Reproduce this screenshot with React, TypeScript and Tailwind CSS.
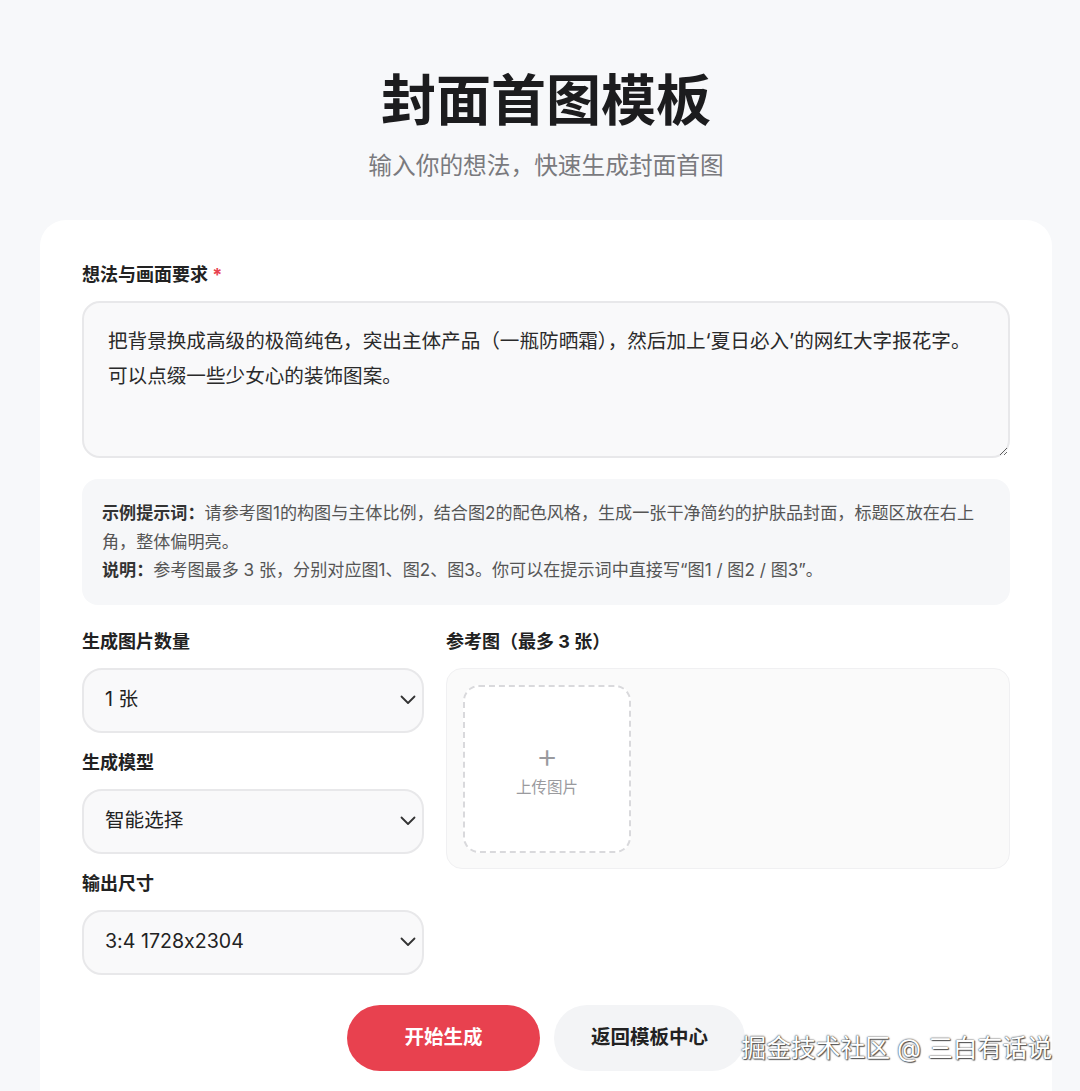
import React from "react";

const FONT = { fontFamily: 'Inter, "Noto Sans CJK SC", sans-serif' };

function Chevron() {
  return (
    <svg width="16" height="10" viewBox="0 0 16 10" fill="none">
      <polyline points="1.5,1.5 8,8 14.5,1.5" stroke="#333" strokeWidth="1.8" strokeLinecap="round" strokeLinejoin="round" />
    </svg>
  );
}

function SelectBox({ value }: { value: string }) {
  return (
    <div className="flex h-[65px] items-center justify-between rounded-[20px] border-2 border-[#e8e8ea] bg-[#f9f9fa] pl-[21px] pr-[6px]">
      <span className="text-[19.6px] text-[#222] [font-feature-settings:'calt'_0]">{value}</span>
      <Chevron />
    </div>
  );
}

function Label({ children }: { children: React.ReactNode }) {
  return <div className="mb-[13px] text-[18px] font-bold leading-[26px] text-[#222]">{children}</div>;
}

export default function App() {
  return (
    <div className="relative min-h-[1091px] overflow-hidden bg-[#f7f8fa]" style={FONT}>
      <div className="pl-[12px] pt-[64px] text-center">
        <h1 className="text-[55px] font-bold leading-[72px] text-[#1c1c1e]">封面首图模板</h1>
        <p className="mt-[14px] text-[23.7px] leading-[32px] text-[#7a7a7e]">输入你的想法，快速生成封面首图</p>
      </div>

      <div className="mx-[40px] mr-[28px] mt-[38px] rounded-[26px] bg-white px-[42px] pb-[60px] pt-[42px]">
        <Label>
          想法与画面要求 <span className="text-[#e8414f]">*</span>
        </Label>
        <textarea
          readOnly
          className="block h-[157px] w-full rounded-[18px] border-2 border-[#e8e8ea] bg-[#f9f9fa] px-[24px] pt-[21px] text-[19.6px] leading-[35px] text-[#2a2a2a] outline-none"
          defaultValue={"把背景换成高级的极简纯色，突出主体产品（一瓶防晒霜），然后加上‘夏日必入’的网红大字报花字。\n可以点缀一些少女心的装饰图案。"}
        />

        <div className="mt-[21px] rounded-[16px] bg-[#f6f7f9] px-[20px] py-[20px] text-[17.1px] leading-[28.5px] text-[#555]">
          <p>
            <strong className="font-bold text-[#333]">示例提示词：</strong>请参考图1的构图与主体比例，结合图2的配色风格，生成一张干净简约的护肤品封面，标题区放在右上角，整体偏明亮。
          </p>
          <p>
            <strong className="font-bold text-[#333]">说明：</strong>参考图最多 3 张，分别对应图1、图2、图3。你可以在提示词中直接写“图1 / 图2 / 图3”。
          </p>
        </div>

        <div className="mt-[24px] flex gap-[22px]">
          <div className="flex w-[342px] flex-col">
            <Label>生成图片数量</Label>
            <SelectBox value="1 张" />
            <div className="h-[17px]" />
            <Label>生成模型</Label>
            <SelectBox value="智能选择" />
            <div className="h-[17px]" />
            <Label>输出尺寸</Label>
            <SelectBox value="3:4 1728x2304" />
          </div>
          <div className="flex flex-1 flex-col">
            <Label>参考图（最多 3 张）</Label>
            <div className="h-[201px] rounded-[16px] border border-[#f0f0f2] bg-[#fafafa] p-[16px]">
              <div className="flex h-[168px] w-[168px] flex-col items-center justify-center rounded-[16px] border-2 border-dashed border-[#d9d9dc] bg-white">
                <div className="text-[34px] font-light leading-[32px] text-[#9a9a9e]">+</div>
                <div className="mt-[6px] text-[15.5px] leading-[20px] text-[#9a9a9e]">上传图片</div>
              </div>
            </div>
          </div>
        </div>

        <div className="mt-[30px] flex justify-center gap-[14px]">
          <button className="h-[66px] w-[193px] rounded-full bg-[#e8414f] text-[19.5px] font-bold text-white">开始生成</button>
          <button className="h-[66px] w-[191px] rounded-full bg-[#f3f4f6] text-[19.5px] font-bold text-[#222]">返回模板中心</button>
        </div>
      </div>

      <div
        className="absolute right-[28px] top-[1030px] text-[24.8px] leading-[36px] text-white"
        style={{ textShadow: "0 0 1px #444, 0 0 2px #555, 1px 1px 1px #555" }}
      >
        掘金技术社区 @ 三白有话说
      </div>
    </div>
  );
}
